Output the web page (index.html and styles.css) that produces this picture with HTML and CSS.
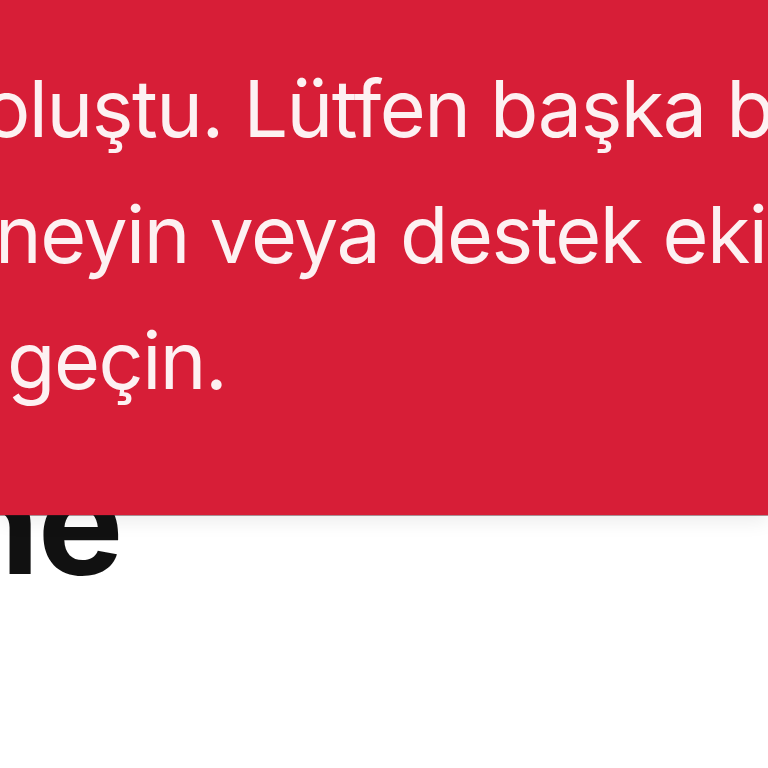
FILE: index.html
```html
<!DOCTYPE html>
<html lang="tr">
<head>
<meta charset="utf-8">
<title>Hata</title>
<link rel="stylesheet" href="styles.css">
</head>
<body>
<main class="page">
  <h1 class="page-title">ne</h1>
</main>
<div class="toast" role="alert">
  <p class="toast-text">
    <span class="line line-1">oluştu. Lütfen başka bir</span>
    <span class="line line-2">neyin veya destek ekibi</span>
    <span class="line line-3">geçin.</span>
  </p>
</div>
</body>
</html>
```
FILE: styles.css
```css
html, body {
  margin: 0;
  padding: 0;
  background: #ffffff;
  overflow: hidden;
}
body {
  font-family: Inter, "Noto Sans", sans-serif;
  width: 768px;
  height: 768px;
}
.page {
  padding-top: 450px;
}
.page-title {
  margin: 0 0 0 -50px;
  font-size: 144px;
  line-height: 1;
  font-weight: 700;
  color: #111111;
  letter-spacing: -2px;
  white-space: nowrap;
}
.toast {
  position: fixed;
  top: 0;
  left: 0;
  right: 0;
  height: 515px;
  box-sizing: border-box;
  background: #d71e37;
  padding-top: 45px;
  box-shadow: 0 1px 0 rgba(80, 20, 30, 0.45), 0 6px 18px rgba(0, 0, 0, 0.08);
  overflow: hidden;
}
.toast-text {
  margin: 0;
  font-size: 79px;
  line-height: 126px;
  font-weight: 400;
  color: #fdf1f2;
  letter-spacing: -1.5px;
  white-space: nowrap;
}
.line {
  display: block;
}
.line-1 { margin-left: -17px; }
.line-2 { margin-left: -5px; }
.line-3 { margin-left: 7px; }
```
